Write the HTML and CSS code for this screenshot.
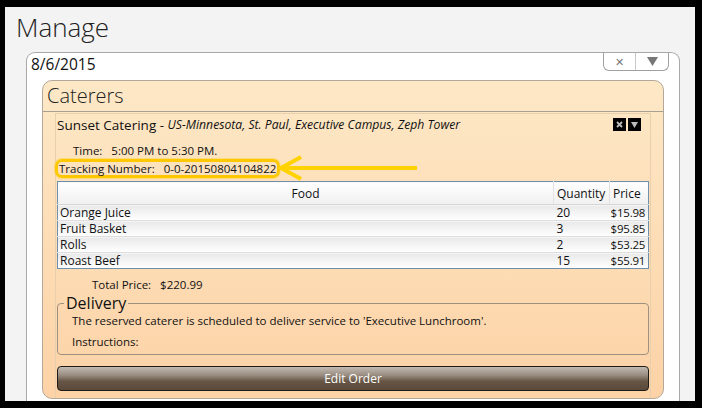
FILE: index.html
```html
<!DOCTYPE html>
<html>
<head>
<meta charset="utf-8">
<link rel="stylesheet" href="styles.css">
</head>
<body>
<div class="frame">
  <h1 class="title">Manage</h1>
  <div class="panel">
    <div class="panel-head">
      <span class="date">8/6/2015</span>
      <div class="head-btns">
        <span class="hb hb-x">&#x2715;</span>
        <span class="hb hb-down"><svg width="11" height="9" viewBox="0 0 11 9"><path d="M0 0H11L5.5 9Z" fill="#767676"/></svg></span>
      </div>
    </div>
    <div class="caterers">
      <div class="cat-title">Caterers</div>
      <div class="item">
        <div class="item-head">
          <span class="name">Sunset Catering - </span><span class="loc">US-Minnesota, St. Paul, Executive Campus, Zeph Tower</span>
          <div class="item-btns">
            <span class="sq"><svg width="7" height="7" viewBox="0 0 7 7"><path d="M1 1L6 6M6 1L1 6" stroke="#bbb" stroke-width="1.8"/></svg></span>
            <span class="sq"><svg width="7" height="6" viewBox="0 0 7 6"><path d="M0 0H7L3.5 6Z" fill="#bbb"/></svg></span>
          </div>
        </div>
        <div class="row time">Time:   5:00 PM to 5:30 PM.</div>
        <div class="row tracking"><span class="hl">Tracking Number:   0-0-20150804104822</span></div>
        <svg class="arrow" width="144" height="26" viewBox="0 0 144 26"><path d="M6 13H140" stroke="#ffd200" stroke-width="4"/><path d="M24 2L4 13L24 24" stroke="#ffd200" stroke-width="4" fill="none"/></svg>
        <table class="grid">
          <colgroup><col class="w-food"><col class="w-qty"><col class="w-price"></colgroup>
          <thead>
            <tr><th class="c-food">Food</th><th>Quantity</th><th>Price</th></tr>
          </thead>
          <tbody>
            <tr><td>Orange Juice</td><td>20</td><td>$15.98</td></tr>
            <tr><td>Fruit Basket</td><td>3</td><td>$95.85</td></tr>
            <tr><td>Rolls</td><td>2</td><td>$53.25</td></tr>
            <tr><td>Roast Beef</td><td>15</td><td>$55.91</td></tr>
          </tbody>
        </table>
        <div class="row total">Total Price:   $220.99</div>
        <fieldset class="delivery">
          <legend>Delivery</legend>
          <div class="dline">The reserved caterer is scheduled to deliver service to 'Executive Lunchroom'.</div>
          <div class="dline instr">Instructions:</div>
        </fieldset>
        <div class="edit">Edit Order</div>
      </div>
    </div>
  </div>
</div>
</body>
</html>
```
FILE: styles.css
```css
* { box-sizing: border-box; }
html, body { margin: 0; padding: 0; }
body { width: 702px; height: 408px; overflow: hidden; font-family: "Open Sans", "Noto Sans", sans-serif; color: #111; }
.frame {
  width: 702px; height: 408px;
  border-style: solid; border-color: #000;
  border-width: 7px 7px 7px 5px;
  background: #f3f3f3;
  overflow: hidden;
}
.title {
  margin: 0; padding: 4px 0 0 11px;
  font-size: 26px; font-weight: 300; line-height: 32px; color: #222;
  height: 45px;
}
.panel {
  margin-left: 21px; width: 654px; height: 400px;
  background: #fff;
  border: 1px solid #a8a8a8; border-bottom: none;
  border-radius: 9px 9px 0 0;
}
.panel-head { display: flex; height: 27px; align-items: flex-start; }
.date { font-size: 15.5px; line-height: 23px; padding-left: 4px; }
.head-btns {
  margin-left: auto; margin-right: 10px;
  display: flex; height: 18px;
  border: 1px solid #a0a0a0; border-top: none;
  border-radius: 0 0 6px 6px;
}
.hb { width: 32px; display: flex; align-items: center; justify-content: center; color: #777; font-size: 11px; }
.hb-x { border-right: 1px solid #c8c8c8; }
.caterers {
  margin: 0 15px;
  height: 319px;
  border: 1px solid #b3a89a;
  border-radius: 10px;
  background: linear-gradient(#fde8c6, #fdd2a6);
  overflow: hidden;
}
.cat-title {
  font-size: 20px; font-weight: 300; line-height: 26px; padding: 2px 0 0 4px; height: 31px;
  border-bottom: 1px solid #a8a090; color: #222;
}
.item {
  position: relative;
  margin: 1px 12px 0; height: 300px;
  border: 1px solid #e8cfae; border-bottom: none;
  padding: 0 1px;
}
.item-head { display: flex; align-items: center; height: 21px; padding-left: 0; white-space: pre; }
.name { font-size: 13.5px; }
.loc { font-size: 12.2px; font-style: italic; }
.item-btns { margin-left: auto; margin-right: 8px; display: flex; gap: 2px; }
.sq { width: 13px; height: 13px; background: #000; display: flex; align-items: center; justify-content: center; }
.row { font-size: 11.5px; white-space: pre; line-height: 17px; }
.time { margin-top: 7px; padding-left: 16px; }
.tracking { padding-left: 1px; height: 20px; }
.hl {
  display: inline-block; margin-left: -3px; padding: 0 1px;
  border: 3px solid #ffc800; border-radius: 7px; line-height: 13px;
  box-shadow: 0 0 0 1px rgba(255, 214, 80, 0.6);
}
.arrow { position: absolute; left: 221px; top: 41px; }
.grid {
  width: 591px; border-collapse: collapse; margin-top: 2px; table-layout: fixed;
  border: 1px solid #6f8fae; font-size: 12px; background: #fff;
}
.w-food { width: 496px; }
.w-qty { width: 56px; }
.w-price { width: 39px; }
.grid th {
  height: 23px; font-weight: normal; padding: 0 3px;
  background: linear-gradient(#ffffff, #f0f0f0);
  border-bottom: 1px solid #d6d6d6; border-left: 1px solid #e2e2e2;
  text-align: left; white-space: nowrap; overflow: hidden;
}
.grid th.c-food { text-align: center; border-left: none; }
.grid td {
  height: 16px; padding: 0 2px; line-height: 15px;
  background: linear-gradient(#e9e9e9, #ffffff);
  border-top: 1px solid #dedede; white-space: nowrap;
}
.grid td:nth-child(2) { padding-left: 3px; }
.grid td:nth-child(3) { padding: 0 0 0 1px; font-size: 11.5px; letter-spacing: -0.2px; overflow: visible; }
.grid tr:first-child td { border-top: none; }
.total { margin-top: 7px; padding-left: 35px; }
.delivery {
  margin: 1px 0 0; padding: 0 0 0 14px; height: 61px;
  border: 1px solid #9d9080; border-radius: 4px;
}
.delivery legend { font-size: 16px; line-height: 18px; padding: 0 2px; margin-left: -8px; }
.dline { font-size: 11.5px; line-height: 17px; }
.instr { margin-top: 4px; }
.edit {
  margin-top: 11px; height: 25px;
  border: 1px solid #1e1a16; border-radius: 4px;
  background: linear-gradient(#c2bab2 0%, #9a8e82 35%, #675646 62%, #5b4a3a 100%);
  color: #fff; font-size: 12px; text-align: center; line-height: 23px;
}
```
